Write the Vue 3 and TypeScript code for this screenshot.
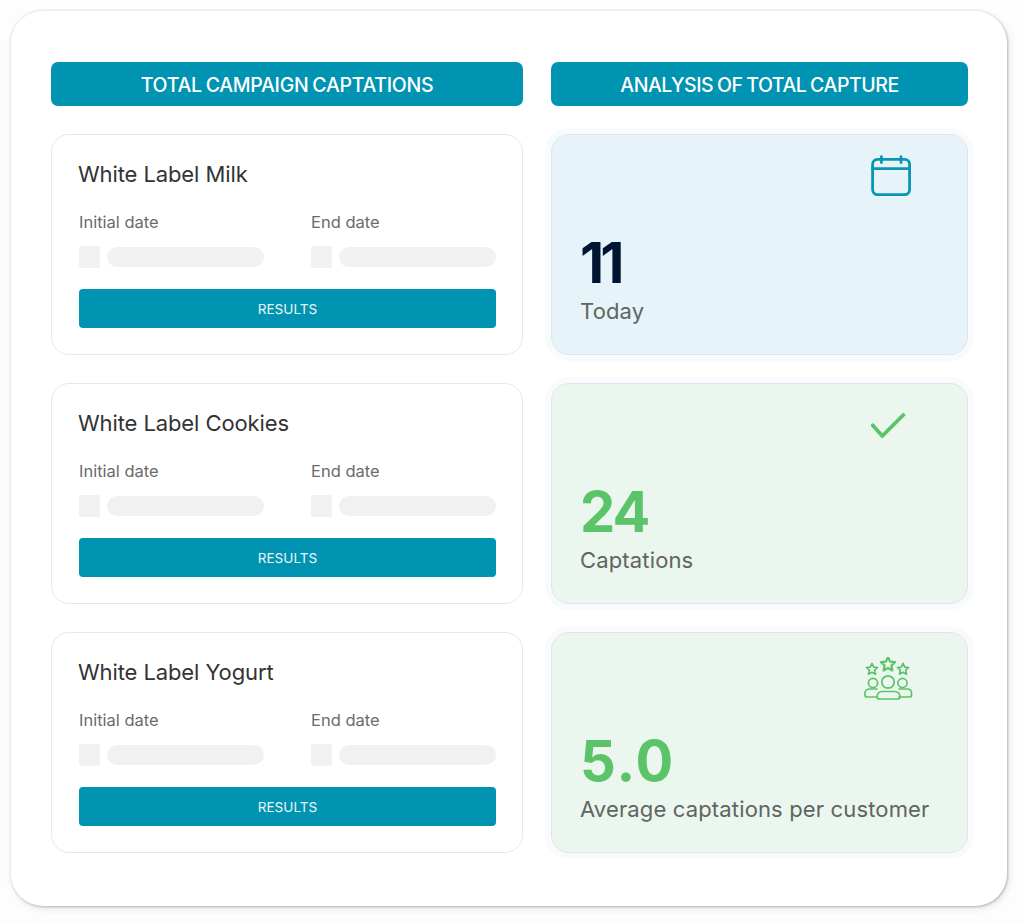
<script setup lang="ts">
const campaigns: string[] = ['White Label Milk', 'White Label Cookies', 'White Label Yogurt']

const dateFields: string[] = ['Initial date', 'End date']

const stats = [
  { kind: 'today', value: '11', label: 'Today' },
  { kind: 'captations', value: '24', label: 'Captations' },
  { kind: 'average', value: '5.0', label: 'Average captations per customer' },
]

const starPath = 'M0 -5.6 L1.7 -1.9 L5.6 -1.5 L2.7 1.2 L3.5 5.2 L0 3.2 L-3.5 5.2 L-2.7 1.2 L-5.6 -1.5 L-1.7 -1.9 Z'
</script>

<template>
  <div class="page">
    <div class="panel">
      <section class="column">
        <h2 class="column-title">TOTAL CAMPAIGN CAPTATIONS</h2>
        <article v-for="name in campaigns" :key="name" class="campaign">
          <h3 class="campaign-name">{{ name }}</h3>
          <div class="dates">
            <div v-for="field in dateFields" :key="field" class="date-field">
              <span class="date-label">{{ field }}</span>
              <div class="date-skeleton">
                <span class="skeleton-box"></span>
                <span class="skeleton-pill"></span>
              </div>
            </div>
          </div>
          <button class="results" type="button">RESULTS</button>
        </article>
      </section>

      <section class="column">
        <h2 class="column-title">ANALYSIS OF TOTAL CAPTURE</h2>
        <article v-for="stat in stats" :key="stat.kind" class="stat" :class="stat.kind">
          <svg v-if="stat.kind === 'today'" class="stat-icon" width="40" height="42" viewBox="0 0 40 42" fill="none" stroke="#0a95b3" stroke-width="2.8" stroke-linecap="round" stroke-linejoin="round">
            <rect x="1.6" y="4.4" width="37" height="35.2" rx="5" />
            <path d="M1.6 13.6H38.4" />
            <path d="M10.4 1.6V7.6M30 1.6V7.6" />
          </svg>
          <svg v-else-if="stat.kind === 'captations'" class="stat-icon" width="40" height="42" viewBox="0 0 40 42" fill="none" stroke="#5bc468" stroke-width="3.8" stroke-linecap="round" stroke-linejoin="round">
            <path d="M1.7 21.3L11.3 32L32.3 11" />
          </svg>
          <svg v-else class="stat-icon" width="50" height="44" viewBox="0 0 50 44" fill="none" stroke="#5bc468" stroke-width="1.7" stroke-linecap="round" stroke-linejoin="round">
            <path :d="starPath" transform="translate(8 12)" />
            <path :d="starPath" transform="translate(24 7) scale(1.25)" />
            <path :d="starPath" transform="translate(39 12)" />
            <circle cx="9" cy="26" r="4.6" />
            <circle cx="24" cy="25" r="6.2" />
            <circle cx="38.5" cy="26" r="4.6" />
            <path d="M13 40H3C1.8 40 1 39.2 1 38V36C1 33.5 3.2 32 5.5 32H13" />
            <path d="M35 40H45.5C46.8 40 47.5 39.2 47.5 38V36C47.5 33.5 45.5 32 43 32H35" />
            <path d="M15 42H33.5C35 42 36 41 36 39.5C36 36.5 33.5 34.5 31 34.5H18C15.5 34.5 13 36.5 13 39.5C13 41 13.8 42 15 42Z" />
          </svg>
          <div class="stat-value">{{ stat.value }}</div>
          <div class="stat-label">{{ stat.label }}</div>
        </article>
      </section>
    </div>
  </div>
</template>

<style scoped>
.page {
  width: 1024px;
  height: 922px;
  padding: 11px 0 0 11px;
  box-sizing: border-box;
  background: #fdfdfd;
  font-family: Inter, 'Noto Sans', sans-serif;
}

.panel {
  width: 996px;
  height: 895px;
  box-sizing: border-box;
  padding: 51px 39px 0 40px;
  display: grid;
  grid-template-columns: 472px 417px;
  column-gap: 28px;
  background: #fff;
  border-radius: 32px;
  box-shadow:
    1px 1px 2px rgba(60, 60, 70, 0.22),
    2px 3px 7px rgba(60, 60, 70, 0.12),
    0 0 0 2px rgba(225, 228, 238, 0.35);
}

.column {
  display: flex;
  flex-direction: column;
  gap: 28px;
}

.column-title {
  margin: 0;
  height: 44px;
  padding-top: 2px;
  box-sizing: border-box;
  display: flex;
  align-items: center;
  justify-content: center;
  background: #0093b2;
  border-radius: 7px;
  color: #fff;
  font-size: 19.5px;
  font-weight: 500;
  letter-spacing: -0.28px;
  word-spacing: -1px;
}

.column + .column .column-title {
  letter-spacing: -0.45px;
}

.campaign {
  height: 221px;
  box-sizing: border-box;
  padding: 24px 27px 0;
  background: #fff;
  border: 1px solid #e4e8f1;
  border-radius: 18px;
}

.campaign-name {
  margin: 0 0 0 -1px;
  color: #333;
  font-size: 22px;
  font-weight: 400;
  line-height: 30px;
  letter-spacing: -0.1px;
}

.dates {
  display: grid;
  grid-template-columns: 232px 1fr;
  margin-top: 23px;
}

.date-field {
  display: flex;
  flex-direction: column;
}

.date-label {
  color: #6b6b6b;
  font-size: 16.5px;
  line-height: 20px;
}

.date-skeleton {
  display: flex;
  align-items: center;
  gap: 7px;
  margin-top: 14px;
}

.skeleton-box {
  width: 21px;
  height: 22px;
  background: #f1f1f1;
  border-radius: 2px;
}

.skeleton-pill {
  width: 157px;
  height: 20px;
  background: #f1f1f1;
  border-radius: 10px;
}

.results {
  display: block;
  width: 417px;
  height: 39px;
  margin-top: 21px;
  padding: 0;
  border: 0;
  border-radius: 4px;
  background: #0093b2;
  color: #e8f6f9;
  font-family: inherit;
  font-size: 13.6px;
}

.stat {
  position: relative;
  height: 221px;
  box-sizing: border-box;
  padding: 0 28px;
  display: flex;
  flex-direction: column;
  border: 1px solid #e0e4f0;
  border-radius: 18px;
  box-shadow: 0 0 0 6px #f9fafc;
}

.today {
  background: #e6f4f9;
}

.captations,
.average {
  background: #ebf6ee;
}

.stat-icon {
  position: absolute;
  top: 20px;
  left: 319px;
}

.average .stat-icon {
  top: 24px;
  left: 312px;
}

.stat-value {
  margin-top: 98px;
  color: #5bc468;
  font-size: 56px;
  font-weight: 700;
  line-height: 60px;
  letter-spacing: -2px;
}

.today .stat-value {
  color: #001533;
  letter-spacing: -4px;
}

.average .stat-value {
  letter-spacing: 2px;
}

.stat-label {
  margin-top: 3px;
  color: #5f6560;
  font-size: 22px;
  line-height: 30px;
  letter-spacing: 0.15px;
}
</style>

<style>
html,
body {
  background: #fdfdfd;
}
</style>
